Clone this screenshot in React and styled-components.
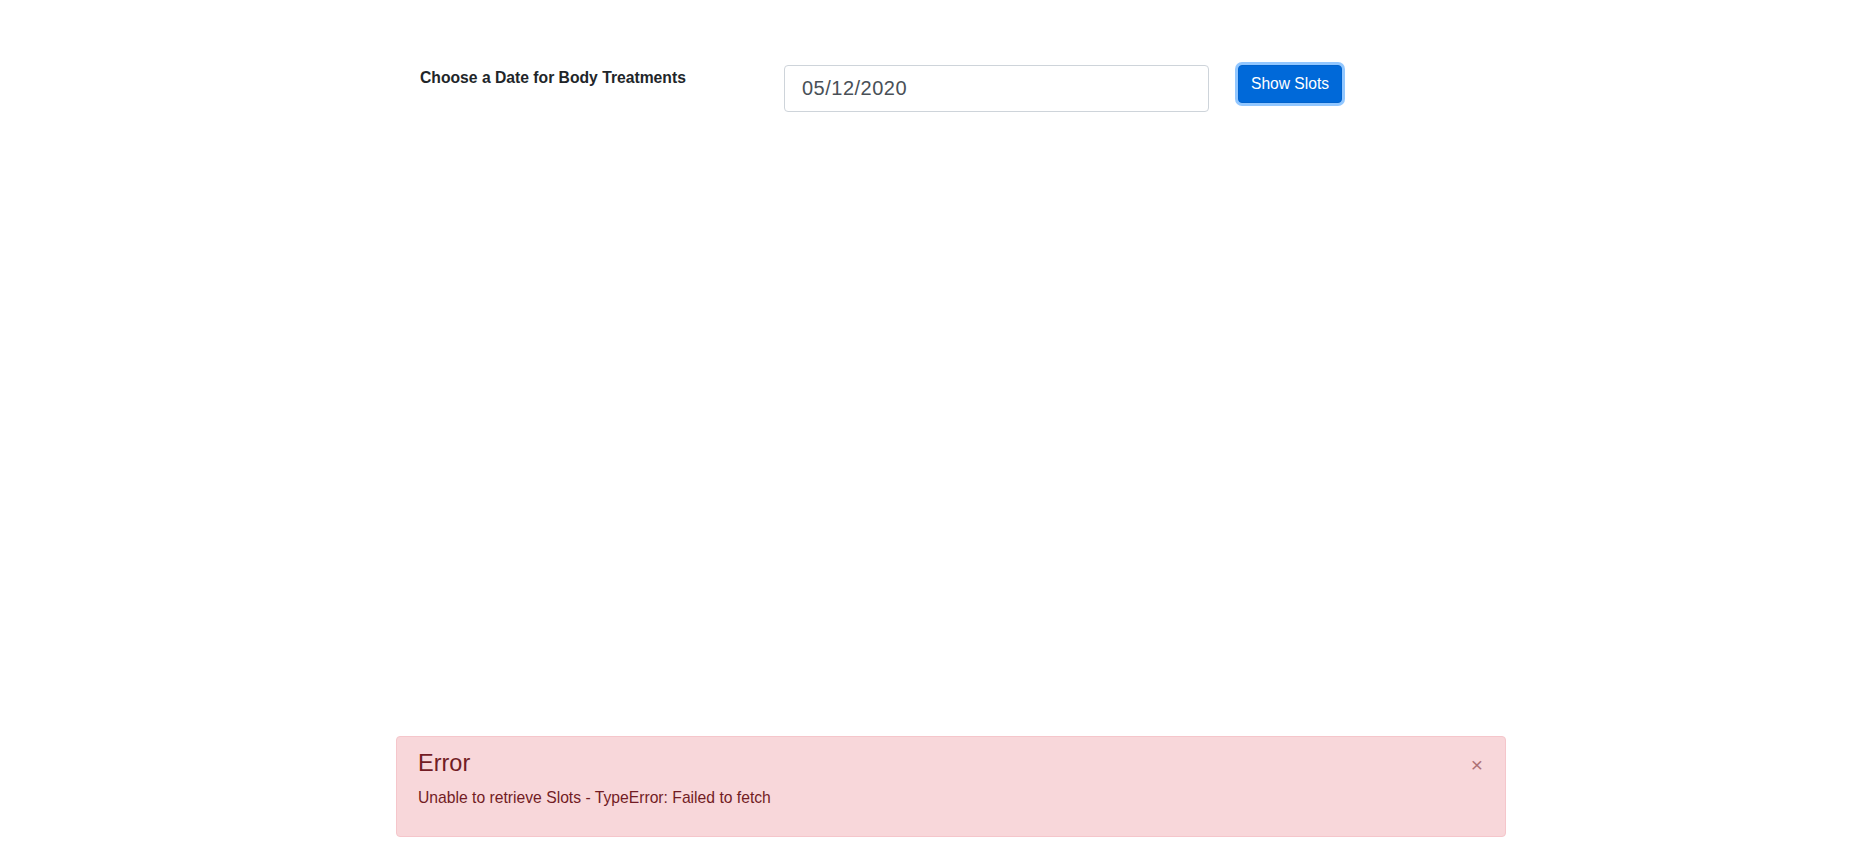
import React from 'react'
import styled, { createGlobalStyle } from 'styled-components'

const GlobalStyle = createGlobalStyle`
  html, body {
    margin: 0;
    padding: 0;
    background: #fff;
  }
  body {
    font-family: "Liberation Sans", Arial, sans-serif;
    color: #212529;
  }
`

/* Pagina completa */
const Page = styled.div`
  min-height: 100vh;
  display: flex;
  flex-direction: column;
  padding: 0 364px 14px 396px;
  box-sizing: border-box;
`

/* Fila del formulario */
const FormRow = styled.div`
  display: grid;
  grid-template-columns: 335px 425px auto;
  column-gap: 29px;
  align-items: start;
  justify-items: start;
  padding: 65px 0 0 24px;
`

const Label = styled.label`
  font-size: 15.7px;
  font-weight: bold;
  color: #212529;
  padding-top: 3px;
  line-height: 20px;
`

const DateInput = styled.input`
  box-sizing: border-box;
  width: 100%;
  height: 47px;
  padding: 8px 17px;
  font-size: 20px;
  letter-spacing: 0.5px;
  font-family: inherit;
  color: #495057;
  background: #fff;
  border: 1px solid #ced4da;
  border-radius: 4px;
  outline: none;
`

const Button = styled.button`
  box-sizing: border-box;
  height: 38px;
  padding: 0 12px;
  font-size: 15.6px;
  font-family: inherit;
  color: #fff;
  background: #0069d9;
  border: 1px solid #0062cc;
  border-radius: 4px;
  box-shadow: 0 0 0 3px rgba(38, 143, 255, 0.5);
  cursor: pointer;
`

/* Alerta de error */
const Alert = styled.div`
  margin-top: auto;
  position: relative;
  box-sizing: border-box;
  height: 101px;
  padding: 12px 64px 12px 21px;
  background: #f8d7da;
  border: 1px solid #f5c6cb;
  border-radius: 4px;
  color: #721c24;
`

const AlertTitle = styled.h4`
  margin: 0 0 8px;
  font-size: 23.5px;
  font-weight: 500;
  line-height: 29px;
  color: #721c24;
`

const AlertText = styled.p`
  margin: 0;
  font-size: 15.7px;
  line-height: 24px;
`

const Close = styled.button`
  position: absolute;
  top: 17px;
  right: 22px;
  padding: 0;
  background: none;
  border: 0;
  font-family: inherit;
  font-size: 21px;
  line-height: 1;
  color: #721c24;
  opacity: 0.55;
  cursor: pointer;
`

const App = () => {
  return (
    <>
      <GlobalStyle />
      <Page>
        <FormRow>
          <Label htmlFor="fecha">Choose a Date for Body Treatments</Label>
          <DateInput id="fecha" type="text" defaultValue="05/12/2020" />
          <Button type="button">Show Slots</Button>
        </FormRow>
        <Alert role="alert">
          <AlertTitle>Error</AlertTitle>
          <AlertText>Unable to retrieve Slots - TypeError: Failed to fetch</AlertText>
          <Close type="button" aria-label="Close">×</Close>
        </Alert>
      </Page>
    </>
  )
}

export default App
